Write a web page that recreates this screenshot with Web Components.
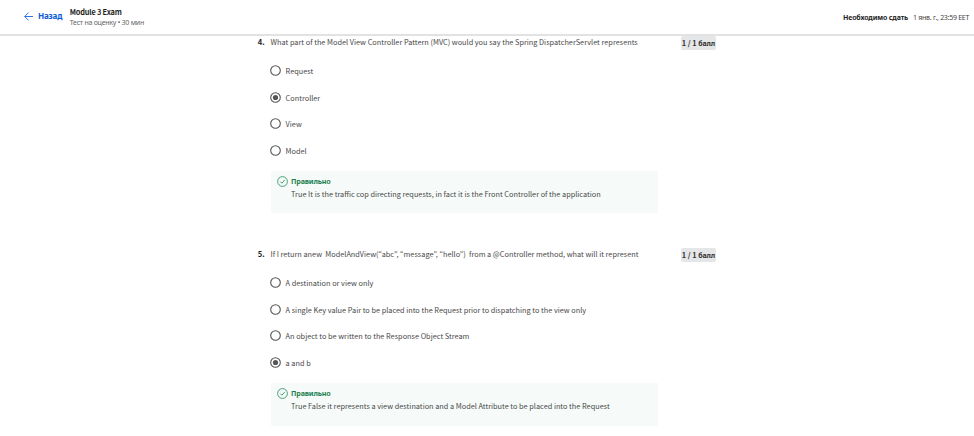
<!DOCTYPE html>
<html lang="ru"><head><meta charset="utf-8"><title>Module 3 Exam</title>
<style>
html,body{margin:0;height:100%;overflow:hidden;background:#fff}
body{font-family:"Noto Sans CJK KR","Source Sans Pro","Open Sans",sans-serif;font-size:7.34px;color:#484848}
</style></head><body>
<exam-page>
<exam-header slot="header"></exam-header>
<exam-question number="4." score="балл">
<span slot="prompt">What part of the Model View Controller Pattern (MVC) would you say the Spring DispatcherServlet represents</span>
<exam-option>Request</exam-option><exam-option checked>Controller</exam-option><exam-option>View</exam-option><exam-option>Model</exam-option>
<exam-feedback slot="feedback">True It is the traffic cop directing requests, in fact it is the Front Controller of the application</exam-feedback>
</exam-question>
<exam-question number="5." score="балл">
<span slot="prompt">If I return anew&nbsp; ModelAndView(“abc”, “message”, “hello”)&nbsp; from a @Controller method, what will it represent</span>
<exam-option>A destination or view only</exam-option><exam-option>A single Key value Pair to be placed into the Request prior to dispatching to the view only</exam-option><exam-option>An object to be written to the Response Object Stream</exam-option><exam-option checked>a and b</exam-option>
<exam-feedback slot="feedback">True False it represents a view destination and a Model Attribute to be placed into the Request</exam-feedback>
</exam-question>
</exam-page>
<script>
const define=(name,html,setup)=>customElements.define(name,class extends HTMLElement{
  constructor(){super();this.attachShadow({mode:'open'}).innerHTML=html;}
  connectedCallback(){if(setup)setup(this,this.shadowRoot);}
});
define('exam-page',`<style>
:host{display:flex;flex-direction:column;height:436px;overflow:hidden}
main{flex:1;min-height:0;padding-left:257px;overflow:hidden}
</style><slot name="header"></slot><main><slot></slot></main>`);
define('exam-header',`<style>
:host{display:flex;flex:none;height:36px;box-sizing:border-box;border-bottom:2px solid #e2e2e2;padding:0 5px 2px 24px;align-items:center;background:#fff;white-space:nowrap;line-height:11px}
.back{display:flex;align-items:center;gap:5px;width:45.7px;color:#0c5bd8;font:700 8.1px/12px "Noto Sans","Open Sans",sans-serif;letter-spacing:-.22px}
.title{flex:1;padding-top:2px}
b{display:block;color:#1f1f1f;font-size:7.4px;font-weight:700;letter-spacing:-.2px}
small{display:block;font:7px/11px "Noto Sans",sans-serif;letter-spacing:-.25px;color:#666}
.due{display:flex;gap:5px;align-items:center;font:7px/11px "Noto Sans",sans-serif;color:#444;padding-top:2px}
.due strong{font-weight:700;color:#1f1f1f;letter-spacing:-.14px}
.due span{letter-spacing:-.28px}
</style><div class="back"><svg width="9" height="9" viewBox="0 0 9 9" fill="none" stroke="#1464dd" stroke-width=".9"><path d="M9 4.5H.7M4.5.6.7 4.5l3.8 3.9"/></svg><span>Назад</span></div>
<div class="title"><b><span>Module 3 Exam</span></b><small><span>Тест на оценку • 30 мин</span></small></div>
<div class="due"><strong>Необходимо сдать</strong><span>1 янв. г., 23:59 EET</span></div>`);
define('exam-question',`<style>
:host{display:grid;grid-template-columns:13.6px 410px 35.5px;height:212.2px;align-content:start;white-space:nowrap}
.num{font-weight:700;font-size:7.6px;color:#1f1f1f;line-height:12px;padding-left:.8px}
.prompt{line-height:12px}
.score{height:13.7px;background:#e5e6e7;border-radius:2px;text-align:center;font-weight:700;line-height:14px;color:#333}
.score span{font:700 7px/14px "Noto Sans",sans-serif;letter-spacing:-.2px}
.body{grid-column:2;padding-top:7.6px}
</style><div class="num"></div><div class="prompt"><slot name="prompt"></slot></div><div class="score">1 / 1 <span></span></div>
<div class="body"><slot></slot><slot name="feedback"></slot></div>`,(el,r)=>{r.querySelector('.num').textContent=el.getAttribute('number');r.querySelector('.score span').textContent=el.getAttribute('score');});
define('exam-option',`<style>
:host{display:flex;height:26.55px;align-items:center;gap:4.6px;margin-left:-.6px}
svg{flex:none}
circle.dot{display:none}:host([checked]) circle.dot{display:block}
</style><svg width="11" height="11" viewBox="0 0 11 11"><circle cx="5.5" cy="5.5" r="4.8" fill="none" stroke="#555" stroke-width="1.1"/><circle class="dot" cx="5.5" cy="5.5" r="2.6" fill="#555"/></svg><span><slot></slot></span>`);
define('exam-feedback',`<style>
:host{display:grid;grid-template-columns:11px 1fr;column-gap:3.5px;width:387.5px;height:42.7px;box-sizing:border-box;padding:5.5px 6px;margin-top:7.3px;background:#f6fbf9;align-content:start;line-height:11.5px}
b{font:700 7.1px/11.5px "Noto Sans",sans-serif;color:#1d8050;letter-spacing:-.15px}
p{margin:0;grid-column:2}
</style><svg width="11" height="11" viewBox="0 0 11 11" fill="none" stroke="#35966a" stroke-width=".9"><circle cx="5.5" cy="5.5" r="4.9"/><path d="m3.3 5.6 1.6 1.6 2.9-3.3"/></svg><b><span>Правильно</span></b><p><slot></slot></p>`);
</script></body></html>
